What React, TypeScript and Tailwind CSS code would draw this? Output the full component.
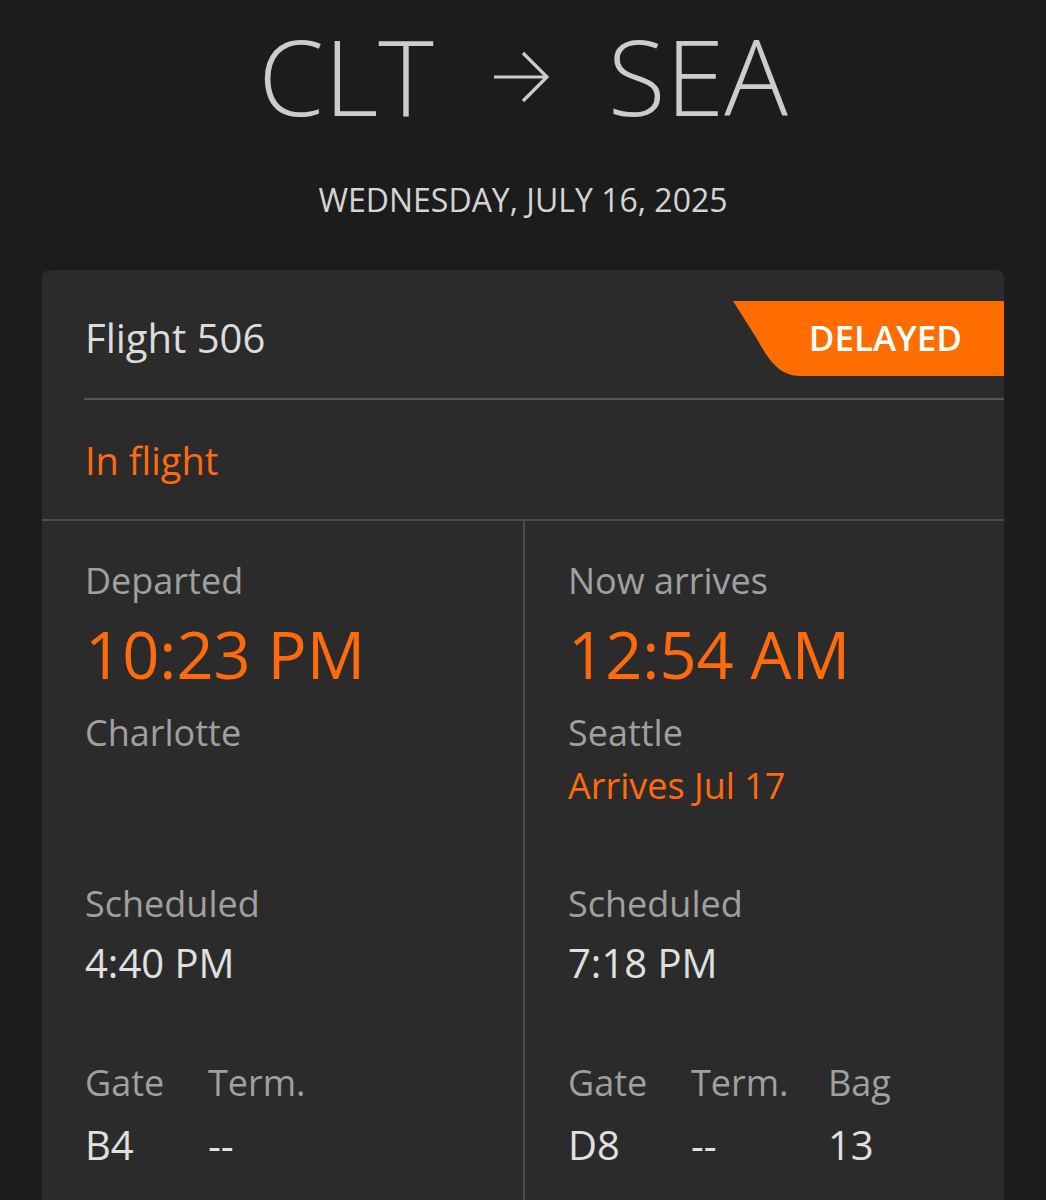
import React from "react";

const ORANGE = "text-[#ff6a0d]";

function Label({ children, className = "" }: { children: React.ReactNode; className?: string }) {
  return <div className={`text-[36px] leading-[36px] text-[#a0a0a0] ${className}`}>{children}</div>;
}

function Column({
  label,
  time,
  city,
  note,
  scheduled,
  info,
}: {
  label: string;
  time: string;
  city: string;
  note?: string;
  scheduled: string;
  info: { k: string; v: string; w: string }[];
}) {
  return (
    <div className="flex flex-col pl-[43px]">
      <div className="h-[365px] pt-[42px] flex flex-col">
        <Label>{label}</Label>
        <div className={`mt-[23px] text-[65px] leading-[65px] ${ORANGE}`}>{time}</div>
        <Label className="mt-[28px]">{city}</Label>
        {note && <div className={`mt-[17px] text-[36px] leading-[36px] ${ORANGE}`}>{note}</div>}
      </div>
      <Label>Scheduled</Label>
      <div className="mt-[21px] text-[40px] leading-[40px] text-[#e0e0e0]">{scheduled}</div>
      <div className="mt-[82px] flex">
        {info.map((i) => (
          <div key={i.k} className={`flex flex-col ${i.w}`}>
            <Label>{i.k}</Label>
            <div className="mt-[24px] text-[40px] leading-[40px] text-[#e0e0e0]">{i.v}</div>
          </div>
        ))}
      </div>
    </div>
  );
}

export default function App() {
  return (
    <div className="w-[1046px] h-[1200px] overflow-hidden bg-[#1c1c1c] font-['Open_Sans',sans-serif]">
      <div className="pt-[22px] flex items-center justify-center text-[#cccccc]">
        <span className="text-[106px] leading-[106px] font-light">CLT</span>
        <svg width="58" height="54" viewBox="0 0 58 54" className="mx-[58px] mt-[4px]">
          <path d="M2 27 H54 M31 3 L55 27 L31 51" fill="none" stroke="#cccccc" strokeWidth="3.2" />
        </svg>
        <span className="text-[106px] leading-[106px] font-light">SEA</span>
      </div>
      <div className="mt-[56px] text-center text-[32px] leading-[32px] text-[#d4d4d4]">WEDNESDAY, JULY 16, 2025</div>

      <div className="mt-[54px] ml-[42px] w-[962px] bg-[#2b2b2b] rounded-t-[8px] h-[1000px]">
        <div className="relative h-[128px] flex items-center pl-[43px] pt-[8px]">
          <span className="text-[40px] leading-[40px] text-[#dcdcdc]">Flight 506</span>
          <div className="absolute right-0 top-[31px] w-[271px] h-[75px]">
            <svg width="271" height="75" viewBox="0 0 271 75" className="absolute inset-0">
              <path d="M0 0 H271 V75 H67 C48 75 37 62 24 38 L0 0 Z" fill="#ff6d00" />
            </svg>
            <span className="absolute right-[42px] top-0 h-[75px] flex items-center text-[35px] font-semibold text-white">
              DELAYED
            </span>
          </div>
        </div>
        <div className="ml-[42px] h-[2px] bg-[#555555]" />
        <div className="h-[119px] flex items-center pl-[43px]">
          <span className={`text-[38px] leading-[38px] ${ORANGE}`}>In flight</span>
        </div>
        <div className="h-[2px] bg-[#4d4d4d]" />
        <div className="grid grid-cols-[481px_2px_1fr] h-[700px]">
          <Column
            label="Departed"
            time="10:23 PM"
            city="Charlotte"
            scheduled="4:40 PM"
            info={[
              { k: "Gate", v: "B4", w: "w-[123px]" },
              { k: "Term.", v: "--", w: "w-[120px]" },
            ]}
          />
          <div className="bg-[#4d4d4d]" />
          <Column
            label="Now arrives"
            time="12:54 AM"
            city="Seattle"
            note="Arrives Jul 17"
            scheduled="7:18 PM"
            info={[
              { k: "Gate", v: "D8", w: "w-[123px]" },
              { k: "Term.", v: "--", w: "w-[137px]" },
              { k: "Bag", v: "13", w: "w-[80px]" },
            ]}
          />
        </div>
      </div>
    </div>
  );
}
